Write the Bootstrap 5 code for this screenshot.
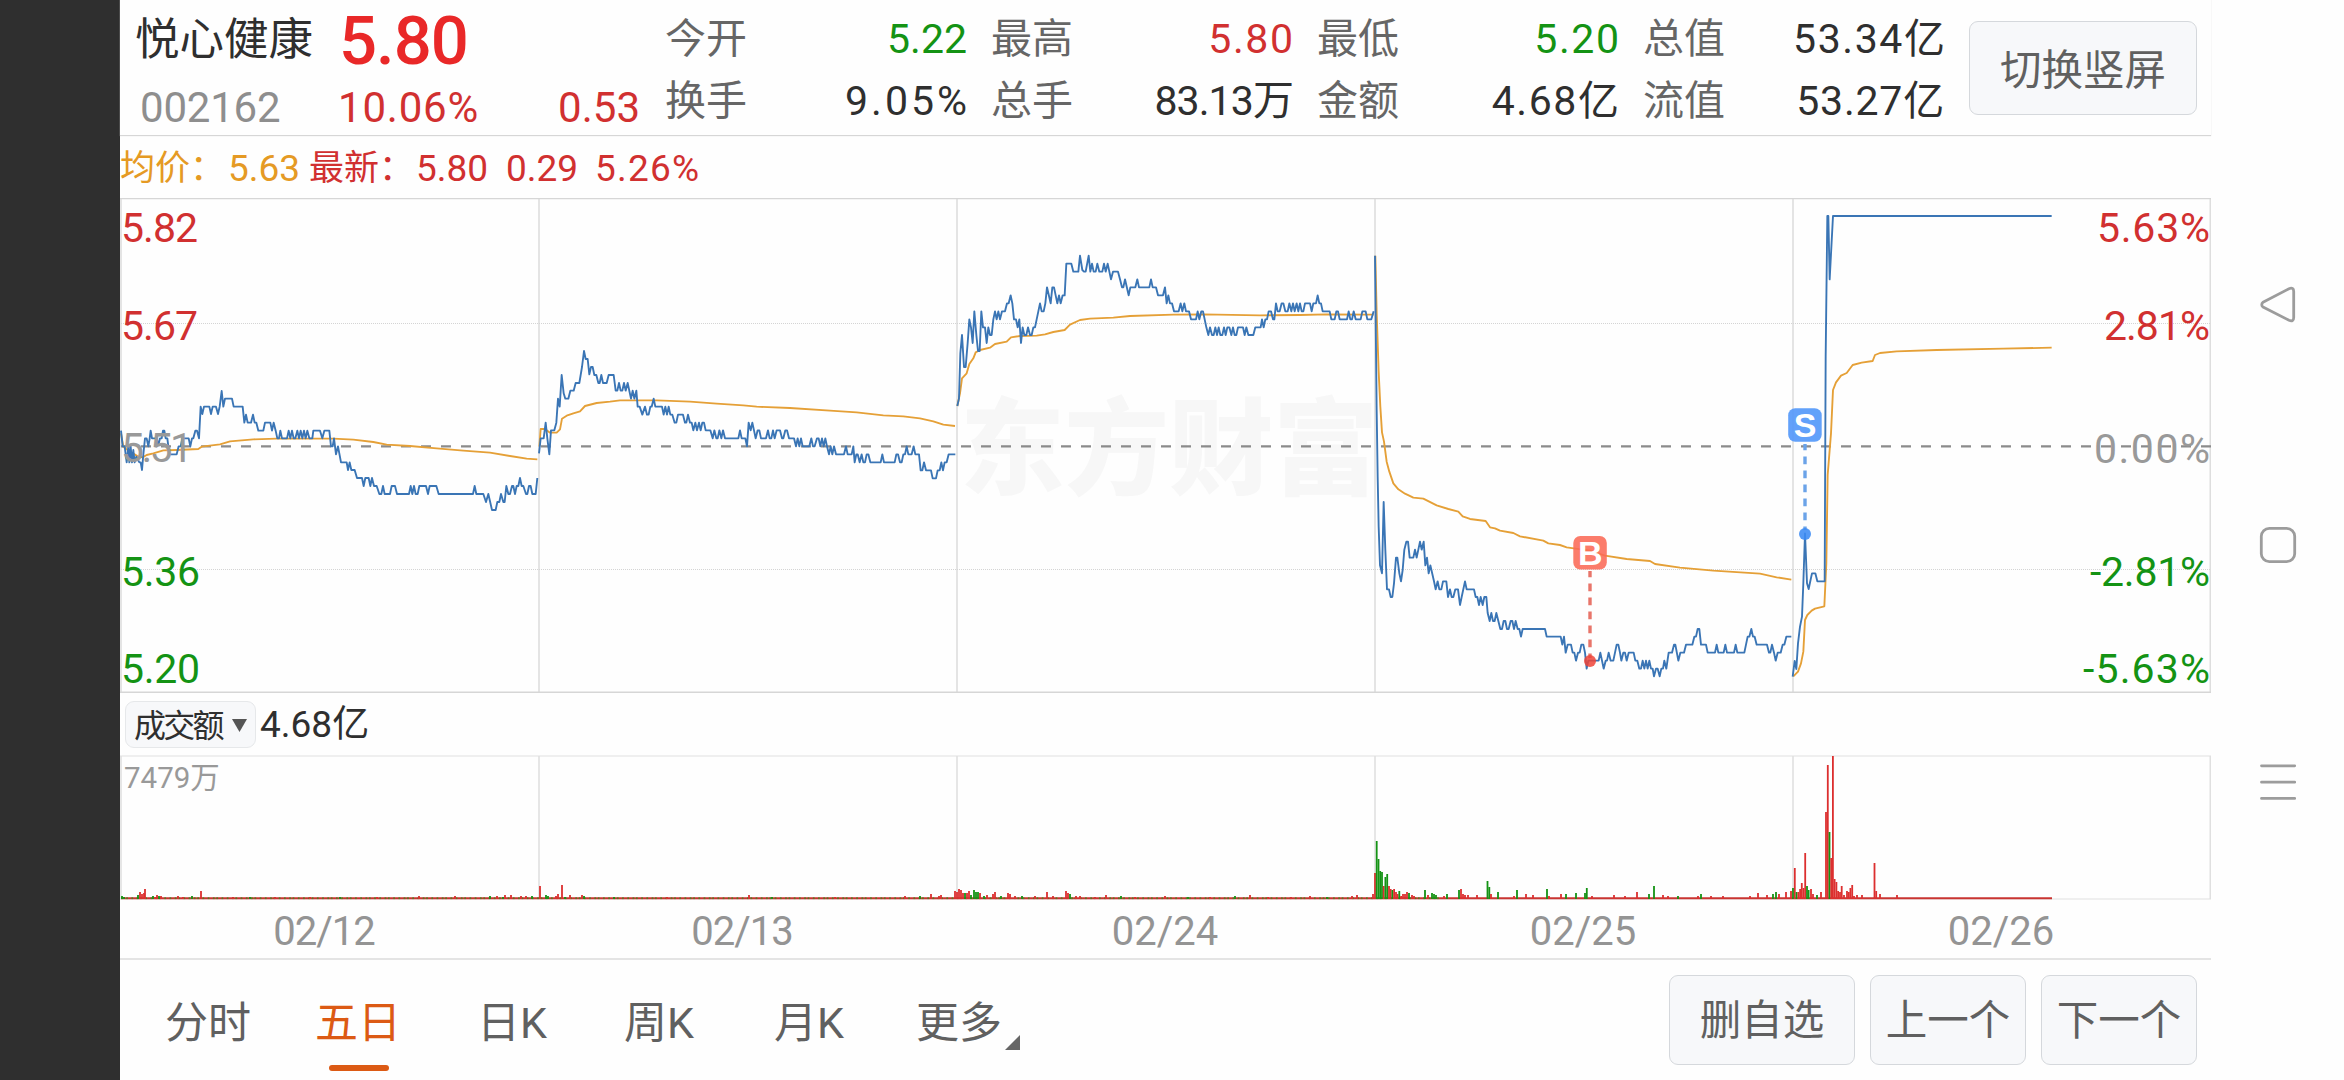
<!DOCTYPE html>
<html lang="zh-CN">
<head>
<meta charset="utf-8">
<meta name="viewport" content="width=device-width, initial-scale=1">
<title>悦心健康 002162</title>
<link rel="stylesheet" href="https://cdn.jsdelivr.net/npm/bootstrap@5.3.0/dist/css/bootstrap.min.css">
<style>
  body{width:2344px;height:1080px;overflow:hidden;background:#fefefe;color:#2f2f2f;font-family:Roboto,"Noto Sans CJK SC",sans-serif;font-size:41px;line-height:1;white-space:nowrap}
  .edge{width:120px;background:#2f2f2f}
  .stage{width:2091px}
  .quote-head{height:136px;border-bottom:1px solid #d6d6d6;box-shadow:0 0 1px #ddd}
  .up{color:#d13030}.down{color:#149314}.muted{color:#666}.soft{color:#8e8e8e}
  .ident{width:544px;padding-left:15px}
  .name-row{height:82px;padding-bottom:1px}
  .stock-name{width:204px;font-size:44.5px}
  .big-price{font-size:67px;font-weight:500;color:#e92828;letter-spacing:-1px;padding-top:2px}
  .sub-row{height:52px;font-size:42px}
  .stock-code{width:203px;padding-left:5px;letter-spacing:-.2px}
  .change-pct{width:180px;letter-spacing:.8px}
  .quote-grid{width:1304px;padding-top:8px}
  .quote-cell{width:326px;height:62px;padding:0 23px 0 1px}
  .wide-num{letter-spacing:1.6px;margin-right:-1.6px}
  .pct-num{letter-spacing:3px;margin-right:-3px}
  .tight-num{letter-spacing:-.9px}
  .soft-btn{background:#f7f8fa;border:1px solid #d5d8dc;border-radius:9px;color:#606060;font-size:41.5px;line-height:1;padding:2px 0 0}
  .turn-btn{width:228px;height:94px;margin-top:21px;margin-left:1px;padding-top:5px}
  .avg-row{height:62px;font-size:37px;padding-top:2px}
  .avg-row .cjk{font-size:35px}
  .avg{color:#e59a24}
  .price-plot{height:495px}
  .vol-row{height:62px;padding:1px 0 0 5px}
  .vol-pick{width:131px;height:47px;font-size:32px;letter-spacing:-2.8px;color:#2f2f2f;border-color:#e6e8ea}
  .vol-plot{height:145px}
  .days{height:60px;font-size:40px;color:#949494;border-bottom:2px solid #e4e4e4}
  .day{width:418px;padding-top:5px}
  .day-shift{padding-right:10px;letter-spacing:-1px}
  .tabs{height:120px;color:#606060;font-size:43px}
  .tab-item{height:120px;padding-top:6px}
  .tab-on{color:#dc5a14}
  .tab-on::after{content:"";position:absolute;left:14px;bottom:9px;width:60px;height:6px;border-radius:3px;background:#dc5a14}
  .foot-btn{width:156px;height:90px;margin-left:15px}
  .foot-wide{width:186px}
  .phone-nav{width:133px}
  svg{display:block}
  .blue-line{fill:none;stroke:#3a75b5;stroke-width:5.6;stroke-linejoin:round}
  .gold-line{fill:none;stroke:#e5a037;stroke-width:5.6;stroke-linejoin:round}
</style>
<script src="https://cdn.jsdelivr.net/npm/bootstrap@5.3.0/dist/js/bootstrap.bundle.min.js"></script>
</head>
<body class="d-flex">
<aside class="edge flex-shrink-0"></aside>
<main class="stage flex-shrink-0 d-flex flex-column">
  <header class="quote-head d-flex flex-shrink-0">
    <div class="ident">
      <div class="name-row d-flex align-items-center"><span class="stock-name">悦心健康</span><span class="big-price">5.80</span></div>
      <div class="sub-row d-flex align-items-center"><span class="stock-code soft">002162</span><span class="change-pct up ps-0">10.06%</span><span class="flex-fill text-end up pe-4">0.53</span></div>
    </div>
    <div class="quote-grid d-flex flex-wrap align-content-start">
      <div class="quote-cell d-flex justify-content-between align-items-center"><span class="muted">今开</span><span class="down">5.22</span></div>
      <div class="quote-cell d-flex justify-content-between align-items-center"><span class="muted">最高</span><span class="up wide-num">5.80</span></div>
      <div class="quote-cell d-flex justify-content-between align-items-center"><span class="muted">最低</span><span class="down wide-num">5.20</span></div>
      <div class="quote-cell d-flex justify-content-between align-items-center"><span class="muted">总值</span><span class="wide-num">53.34亿</span></div>
      <div class="quote-cell d-flex justify-content-between align-items-center"><span class="muted">换手</span><span class="pct-num">9.05%</span></div>
      <div class="quote-cell d-flex justify-content-between align-items-center"><span class="muted">总手</span><span class="tight-num">83.13万</span></div>
      <div class="quote-cell d-flex justify-content-between align-items-center"><span class="muted">金额</span><span class="wide-num">4.68亿</span></div>
      <div class="quote-cell d-flex justify-content-between align-items-center"><span class="muted">流值</span><span style="letter-spacing:.8px">53.27亿</span></div>
    </div>
    <button class="btn soft-btn turn-btn">切换竖屏</button>
  </header>
  <section class="avg-row d-flex align-items-center flex-shrink-0">
    <div class="d-flex align-items-center avg" style="width:189px"><span class="cjk" style="width:108px">均价：</span><span>5.63</span></div>
    <div class="d-flex align-items-center up"><span class="cjk" style="width:107px">最新：</span><span style="width:90px">5.80</span><span style="width:89px">0.29</span><span style="letter-spacing:1.2px">5.26%</span></div>
  </section>
  <section class="price-plot flex-shrink-0">
    <svg width="2091" height="495" viewBox="120 198 2091 495">
      <text x="960" y="486" font-family="Noto Sans CJK SC" font-weight="900" font-size="104.5" fill="#f7f7f7">东方财富</text>
      <g stroke="#dedede" stroke-width="1.6"><path d="M539 199V692M957 199V692M1375 199V692M1793 199V692M2210.3 198V692M121 198V692"/></g>
      <path d="M120 198.6H2211" stroke="#d6d6d6" stroke-width="1.2"/><path d="M120 692.3H2211" stroke="#d6d6d6" stroke-width="1.8"/>
      <path d="M121 323.5H2211M121 569.5H2211" stroke="#d4d4d4" stroke-dasharray="1 1"/>
      <path d="M121 446.3H2211" stroke="#8b8b8b" stroke-width="2.2" stroke-dasharray="10 10"/>
      <g transform="translate(110 190) scale(.33333)">
        <polyline class="gold-line" points="33,730 40,770 60,785 85,800 98,802 110,795 130,790 160,781 200,780 265,777 275,770 330,763 360,754 430,748 500,746 670,746 730,749 790,756 830,764 900,768 980,775 1060,782 1140,788 1200,798 1250,806 1282,808"/>
        <polyline class="blue-line" points="33,722 38,769 44,769 50,817 55,769 58,817 62,769 66,817 70,780 74,817 79,800 88,817 92,817 96,840 100,793 105,745 110,745 115,769 119,745 122,722 126,745 140,745 145,765 150,745 155,745 159,722 163,722 167,745 172,745 178,793 200,793 206,769 212,769 217,745 236,745 241,769 246,745 250,745 256,722 261,722 267,745 272,650 277,672 282,650 298,650 303,672 308,650 318,650 324,672 329,650 335,603 340,650 345,626 366,626 371,650 398,650 403,698 408,674 413,698 423,698 429,674 434,698 439,698 445,722 460,722 465,698 481,698 486,722 491,698 497,722 502,745 507,745 511,722 516,745 531,745 536,722 541,745 546,722 551,745 556,745 562,722 567,745 572,722 577,745 582,722 587,745 592,722 598,745 607,745 610,722 630,722 637,745 643,722 658,722 663,769 668,769 672,745 678,793 684,769 693,817 710,817 714,840 719,817 724,840 734,840 741,864 756,864 761,888 766,864 776,864 781,888 786,864 792,888 800,888 808,912 814,912 819,888 824,912 840,912 845,888 855,888 861,912 897,912 902,888 907,912 912,888 917,912 923,912 928,888 948,888 954,912 959,888 979,888 986,912 1089,912 1094,888 1099,912 1120,912 1128,936 1135,912 1146,960 1157,960 1162,936 1168,936 1173,912 1180,936 1184,936 1189,888 1195,912 1200,912 1206,888 1210,888 1215,912 1220,888 1225,888 1230,864 1235,888 1240,888 1248,912 1252,912 1257,888 1262,888 1267,912 1277,912 1282,864"/>
      </g>
      <g transform="translate(530 300) scale(.33333)">
        <polyline class="gold-line" points="28,440 32,387 45,387 60,398 80,398 90,388 96,356 110,347 130,340 150,334 165,318 200,309 240,305 270,301 380,301 480,305 560,311 640,316 680,320 780,324 900,332 980,337 1060,346 1120,349 1170,355 1210,364 1240,374 1275,378"/>
        <polyline class="blue-line" points="27,460 32,415 41,415 47,368 52,415 58,463 63,391 73,391 79,368 84,296 89,320 95,225 101,280 106,296 115,296 121,272 131,272 137,249 148,249 156,201 162,153 167,177 173,177 178,223 183,201 188,201 193,225 199,225 205,249 209,249 214,225 219,249 230,249 236,225 251,225 257,272 262,272 267,249 272,272 277,272 282,249 287,272 293,249 303,296 308,272 313,296 319,272 323,320 329,320 337,344 345,320 351,344 356,344 361,320 365,320 371,296 376,320 396,320 401,344 406,320 411,344 416,320 421,344 427,344 434,368 439,368 444,344 459,344 465,368 469,368 474,344 480,368 485,368 490,391 496,368 501,391 507,368 512,391 517,368 522,368 527,391 541,391 548,415 553,391 559,415 563,415 568,391 574,415 579,391 585,415 625,415 630,391 635,415 646,415 651,439 656,368 662,391 667,368 672,391 677,415 683,391 688,391 693,415 708,415 714,391 719,415 724,415 729,391 734,415 740,391 750,391 756,415 760,415 766,391 771,391 777,415 792,415 798,439 803,415 808,439 813,415 818,439 838,439 844,415 849,439 854,439 861,415 866,415 871,439 876,415 881,439 886,415 891,439 897,463 902,439 907,463 912,439 918,463 942,463 948,439 953,463 965,463 970,439 974,487 979,463 983,463 989,487 995,463 1000,487 1005,487 1010,463 1015,463 1021,487 1052,487 1057,463 1062,487 1094,487 1099,463 1104,463 1110,487 1115,487 1120,463 1125,463 1130,439 1135,463 1145,463 1151,439 1156,463 1167,463 1172,511 1177,511 1182,487 1188,511 1203,511 1208,535 1218,535 1223,511 1229,511 1234,487 1239,511 1244,487 1250,487 1256,463 1276,463"/>
      </g>
      <g transform="translate(940 230) scale(.33333)">
        <polyline class="gold-line" points="52,528 60,490 66,445 80,430 88,402 100,385 107,367 120,360 150,353 165,342 200,335 213,322 240,318 290,317 315,313 340,306 374,300 390,284 420,270 450,266 520,263 570,258 700,254 790,253 960,256 1080,255 1160,253 1301,254"/>
        <polyline class="blue-line" points="52,528 57,505 61,370 66,315 72,411 77,411 83,339 88,268 93,292 98,339 103,244 109,315 114,363 119,363 124,244 129,292 135,292 140,339 145,292 150,315 155,315 160,268 165,244 170,268 175,244 180,268 186,244 195,244 201,220 206,220 212,196 217,220 222,268 228,268 233,292 238,268 243,339 248,292 253,315 259,315 264,292 270,315 275,315 280,292 285,292 290,268 295,244 300,220 305,244 311,244 316,220 321,172 332,220 337,172 342,172 352,220 357,196 362,220 368,196 374,196 379,101 394,101 400,125 415,125 420,77 427,120 432,125 437,125 446,77 451,125 456,101 461,125 467,125 472,101 478,125 487,125 492,101 497,125 503,101 513,148 519,125 534,125 540,148 546,172 550,172 555,148 566,196 571,172 586,172 592,148 597,172 628,172 633,148 638,172 648,172 654,196 669,196 675,172 680,220 685,196 690,220 696,220 702,244 716,244 722,220 727,244 733,220 738,244 747,244 753,268 768,268 773,244 778,268 784,244 789,244 799,292 805,315 810,292 816,315 821,315 826,292 831,315 836,292 841,315 847,315 852,292 857,315 862,292 868,292 874,315 879,292 884,315 889,315 894,292 909,292 914,315 919,292 925,315 940,315 946,292 962,292 966,268 971,292 976,268 981,268 986,244 993,244 999,268 1003,268 1008,220 1013,244 1019,244 1025,220 1030,220 1036,244 1043,244 1048,220 1054,244 1059,220 1064,244 1070,220 1075,244 1080,220 1085,244 1090,244 1095,220 1110,220 1115,244 1120,220 1128,220 1133,196 1138,220 1143,220 1148,244 1169,244 1174,268 1184,268 1189,244 1194,244 1199,268 1221,268 1226,244 1231,268 1236,268 1241,244 1247,268 1262,268 1267,244 1277,244 1282,268 1294,268 1301,244"/>
      </g>
      <g transform="translate(1360 230) scale(.33333)">
        <polyline class="gold-line" points="46,77 50,250 56,425 61,530 66,607 72,635 80,695 88,725 100,760 115,778 135,791 160,803 190,806 230,826 265,837 295,845 308,859 330,867 377,873 390,892 405,895 420,902 460,909 480,919 550,932 565,940 600,945 620,952 690,962 735,977 800,987 870,993 885,1002 960,1013 1060,1022 1200,1031 1250,1042 1294,1049"/>
        <polyline class="blue-line" points="45,77 50,540 53,740 56,890 60,1006 66,1030 71,816 76,960 81,1078 87,1078 92,1101 97,1101 102,1060 108,983 112,983 118,1030 123,1054 128,1020 133,959 139,935 144,935 149,983 160,983 165,959 170,983 175,959 180,935 185,959 191,935 196,1006 201,983 206,1030 211,1006 222,1054 227,1078 233,1054 238,1078 244,1078 249,1054 259,1054 264,1101 270,1078 275,1101 280,1101 286,1078 294,1078 300,1125 305,1101 315,1054 320,1078 342,1078 347,1101 352,1101 357,1125 362,1101 368,1125 373,1101 379,1101 383,1149 389,1173 394,1149 399,1173 404,1173 409,1149 415,1173 421,1197 426,1197 431,1173 436,1173 441,1197 446,1197 452,1173 457,1173 462,1197 467,1173 473,1197 478,1197 483,1220 488,1197 555,1197 560,1220 602,1220 607,1244 612,1220 617,1268 623,1244 633,1244 638,1268 643,1268 648,1292 654,1268 659,1268 664,1244 670,1244 675,1268 680,1316 685,1292 716,1292 721,1268 731,1316 737,1292 741,1292 746,1268 752,1292 760,1292 765,1268 770,1244 775,1244 780,1268 784,1292 790,1268 795,1268 800,1292 806,1268 821,1268 826,1292 832,1292 838,1316 843,1316 848,1292 853,1316 858,1292 863,1316 868,1292 873,1316 878,1316 882,1339 888,1316 893,1316 899,1339 904,1316 909,1316 913,1292 919,1316 926,1268 936,1268 942,1244 946,1244 955,1292 961,1268 972,1268 978,1244 997,1244 1003,1220 1008,1220 1013,1197 1018,1197 1023,1244 1038,1244 1043,1268 1065,1268 1070,1244 1075,1268 1091,1268 1096,1244 1101,1268 1122,1268 1127,1244 1132,1268 1153,1268 1158,1244 1163,1220 1168,1220 1174,1197 1179,1220 1184,1220 1190,1244 1221,1244 1227,1268 1231,1268 1236,1244 1242,1268 1247,1292 1253,1268 1262,1268 1268,1244 1273,1244 1279,1220 1294,1220"/>
      </g>
      <g transform="translate(1770 190) scale(.33333)">
        <polyline class="gold-line" points="70,1459 84,1445 93,1420 100,1385 105,1290 112,1275 125,1262 135,1256 163,1249 169,1120 173,855 183,730 189,600 198,577 213,557 230,549 248,525 275,518 308,513 315,495 330,489 380,484 500,480 700,476 845,473"/>
        <polyline class="blue-line" points="68,1460 74,1413 79,1437 84,1360 90,1310 96,1280 100,1180 105,1030 111,1180 116,1197 121,1173 126,1150 136,1150 142,1174 164,1174 167,500 172,78 175,78 179,268 189,78 845,78"/>
      </g>
      <g font-size="41">
        <text x="121" y="242" class="up" fill="currentColor" textLength="77">5.82</text>
        <text x="121" y="340" class="up" fill="currentColor" textLength="77">5.67</text>
        <text x="121" y="462" fill="#999" textLength="72">5.51</text>
        <text x="121" y="585.5" class="down" fill="currentColor" textLength="79">5.36</text>
        <text x="121" y="682.5" class="down" fill="currentColor" textLength="79">5.20</text>
        <g text-anchor="end">
          <text x="2210" y="242" class="up" fill="currentColor" textLength="113">5.63%</text>
          <text x="2210" y="340" class="up" fill="currentColor" textLength="106">2.81%</text>
          <text x="2210" y="462.5" fill="#999" textLength="116">0.00%</text>
          <text x="2210" y="585.5" class="down" fill="currentColor" textLength="120">-2.81%</text>
          <text x="2210" y="682.5" class="down" fill="currentColor" textLength="127">-5.63%</text>
        </g>
      </g>
      <g font-family="Liberation Sans" font-weight="700" font-size="34" text-anchor="middle">
        <path d="M1590 571V658" stroke="#e8756a" stroke-width="3.4" stroke-dasharray="7.7 6.3" stroke-dashoffset="1.5"/>
        <circle cx="1590" cy="661" r="6" fill="#ee4438" fill-opacity=".85"/>
        <rect x="1573.3" y="536" width="33.5" height="33.5" rx="7" fill="#fb6a57" fill-opacity=".88"/>
        <text x="1590.2" y="565" fill="#fff">B</text>
        <path d="M1805 444V530" stroke="#6ba3e8" stroke-width="3.4" stroke-dasharray="7.7 6.3" stroke-dashoffset="1.5"/>
        <circle cx="1805" cy="534" r="6" fill="#3c8bf4" fill-opacity=".88"/>
        <rect x="1788.2" y="408.3" width="33.5" height="33.5" rx="7" fill="#5599fa" fill-opacity=".92"/>
        <text x="1805" y="437.3" fill="#fff">S</text>
      </g>
    </svg>
  </section>
  <section class="vol-row d-flex align-items-center flex-shrink-0">
    <button class="btn soft-btn vol-pick d-flex align-items-center justify-content-between ps-2 pe-2"><span>成交额</span><svg width="15" height="13"><path d="M0 0H15L7.5 13Z" fill="#555"/></svg></button>
    <span class="ps-1" style="font-size:37px">4.68亿</span>
  </section>
  <section class="vol-plot flex-shrink-0">
    <svg width="2091" height="145" viewBox="120 755 2091 145">
      <path d="M120 756H2211M120 899H2211" stroke="#e0e0e0" stroke-width="1.2"/>
      <path d="M121 756V899M539 756V899M957 756V899M1375 756V899M1793 756V899M2210.3 756V899" stroke="#e0e0e0" stroke-width="1.6"/>
      <path d="M121 898.3H2052" stroke="#c93431" stroke-width="2"/>
      <g id="vol-bars"></g>
      <text x="124" y="788" font-size="29.5" fill="#999">7479万</text>
    </svg>
  </section>
  <section class="days d-flex flex-shrink-0 text-center">
    <div class="day day-shift d-flex align-items-center justify-content-center">02/12</div>
    <div class="day day-shift d-flex align-items-center justify-content-center">02/13</div>
    <div class="day d-flex align-items-center justify-content-center">02/24</div>
    <div class="day d-flex align-items-center justify-content-center">02/25</div>
    <div class="day d-flex align-items-center justify-content-center">02/26</div>
  </section>
  <nav class="tabs d-flex flex-shrink-0">
    <div class="tab-item d-flex align-items-center" style="width:150px;padding-left:45px">分时</div>
    <div class="d-flex" style="width:207px;padding-left:45px"><div class="tab-item tab-on position-relative d-flex align-items-center">五日</div></div>
    <div class="tab-item d-flex align-items-center" style="width:147px">日K</div>
    <div class="tab-item d-flex align-items-center" style="width:150px">周K</div>
    <div class="tab-item d-flex align-items-center" style="width:142px">月K</div>
    <div class="tab-item d-flex align-items-center">更多<svg class="align-self-end" width="16" height="16" style="margin:0 0 29px 2px"><path d="M16 0V15H1Z" fill="#666"/></svg></div>
    <div class="ms-auto d-flex" style="padding:15px 14px 0 0">
      <button class="btn soft-btn foot-btn foot-wide">删自选</button>
      <button class="btn soft-btn foot-btn">上一个</button>
      <button class="btn soft-btn foot-btn">下一个</button>
    </div>
  </nav>
</main>
<aside class="phone-nav flex-shrink-0">
  <svg width="133" height="1080" viewBox="2211 0 133 1080" fill="none" stroke="#9c9c9c" stroke-width="2.8" stroke-linejoin="round" stroke-linecap="round">
    <path d="M2263 302.3L2289 288.7Q2293.7 287 2293.7 291.5V317.5Q2293.7 322 2289 320.3L2263 307Q2260.5 304.6 2263 302.3Z"/>
    <rect x="2261.3" y="528.3" width="33.4" height="33.4" rx="8"/>
    <path d="M2261.5 765.8H2294.7M2261.5 782.2H2294.7M2261.5 798.4H2294.7"/>
  </svg>
</aside>
<script>
// Turnover bars: x position, bar height, direction (r = up, g = down)
const bars = `122 3 g,124 2 g,138 4 g,140 7 r,142 5 r,144 6 r,145 10 r,153 3 g,155 2 r,157 4 r,159 3 g,161 3 r,178 3 r,183 2 r,192 3 g,201 8 r,233 2 r,250 2 g,275 2 r,310 2 r,340 2 g,377 2 r,419 3 r,455 3 r,490 3 g,497 3 r,503 2 g,505 4 r,511 4 r,521 3 r,526 3 r,532 3 g,540 13 r,546 4 g,548 3 g,556 3 r,558 5 r,562 14 r,565 2 g,570 4 r,582 4 r,584 3 g,614 2 g,667 2 r,749 4 r,772 2 g,835 2 r,905 3 r,920 3 g,931 5 r,939 3 r,941 4 r,955 8 r,957 7 r,959 10 r,961 9 r,963 6 r,965 6 g,967 6 r,969 8 r,971 4 g,974 9 g,976 7 g,978 7 g,980 6 r,984 3 g,987 4 r,993 5 r,995 7 r,1001 3 g,1008 6 r,1010 5 r,1015 3 r,1022 3 g,1035 3 r,1047 7 r,1053 3 r,1066 8 r,1068 6 r,1070 5 g,1076 3 r,1080 3 r,1095 2 r,1106 4 r,1121 3 g,1135 2 r,1165 3 r,1188 2 g,1210 2 r,1235 3 g,1250 4 r,1268 2 r,1291 2 r,1310 3 r,1327 2 g,1352 3 r,1357 4 r,1373 5 r,1375 26 r,1376.7 58 g,1378.5 40 g,1380.2 28 g,1382 27 g,1383.7 13 r,1385.4 22 g,1387.2 25 g,1389 13 r,1390.7 10 r,1392.4 9 g,1394.1 10 r,1396 7 r,1397.6 5 r,1399.3 8 g,1401.1 3 r,1403 5 r,1405 5 r,1407 7 r,1409 6 g,1412 4 r,1414 3 r,1425 9 g,1428 4 r,1432 6 g,1434 5 g,1436 4 g,1444 3 r,1447 5 g,1459 9 g,1461 10 r,1463 5 r,1465 4 r,1468 4 r,1477 4 r,1487.5 18 g,1489.3 12 g,1491 5 r,1498 7 g,1514 3 r,1517 9 g,1526 5 r,1533 4 r,1547 10 g,1549 3 r,1561 5 r,1566 5 g,1576 6 g,1585 6 g,1586.8 11 g,1592 3 r,1614 4 r,1625 3 r,1637 7 r,1649 5 g,1654 13 g,1663 4 r,1668 3 r,1678 3 g,1698 3 r,1701 5 g,1711 3 r,1723 3 r,1750 3 r,1758 6 r,1767 4 r,1773 5 g,1776 7 g,1779 5 r,1786 7 r,1791 8 r,1793 11 g,1794.8 31 r,1796.6 7 g,1798.4 7 r,1800.1 10 r,1801.8 16 r,1803.5 11 r,1805.2 46 r,1807 13 g,1808.6 9 g,1811 10 r,1813 5 r,1817 4 g,1821 7 r,1826 87 r,1827.8 134 r,1829.5 67 g,1831.2 41 r,1832.9 143 r,1834.6 20 r,1836.4 17 r,1838.1 8 r,1840 7 r,1841.7 13 r,1844 4 r,1847 8 r,1848.8 7 r,1850.4 11 r,1852.2 14 r,1854 3 r,1857 4 r,1862 4 r,1874.5 36 r,1876.2 8 r,1880 5 r,1897 4 r`;
let svg = '';
// thin alternation of falling minutes along the base
for (let i = 0; i < 760; i++) if ((i * 37 % 11) < 4) svg += `<rect x="${121 + i * 1.734}" y="897.3" width="1.7" height="1.8" fill="#3b8a1c" fill-opacity=".8"/>`;
bars.split(',').forEach(b => {
  const [x, h, d] = b.split(' ');
  svg += `<rect x="${x - 0.9}" y="${899 - h}" width="1.8" height="${h}" fill="${d === 'r' ? '#dc2f2f' : '#149314'}"/>`;
});
document.getElementById('vol-bars').innerHTML = svg;
</script>
</body>
</html>
